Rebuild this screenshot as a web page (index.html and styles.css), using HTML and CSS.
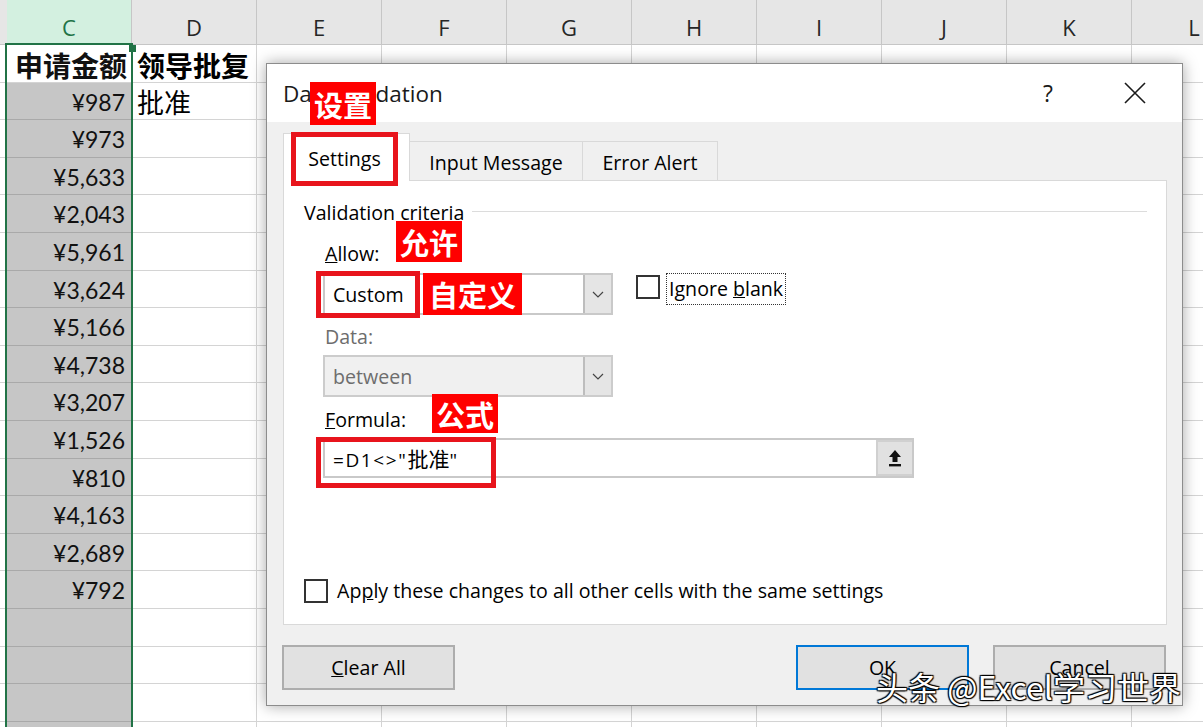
FILE: index.html
```html
<!DOCTYPE html>
<html>
<head>
    <title>Data Validation</title>
    <link rel="stylesheet" href="styles.css">
</head>
<body>
    <div class="sheet">
        <div class="colhead">
            <div class="stub"></div>
            <div class="col active">C</div>
            <div class="col">D</div>
            <div class="col">E</div>
            <div class="col">F</div>
            <div class="col">G</div>
            <div class="col">H</div>
            <div class="col">I</div>
            <div class="col">J</div>
            <div class="col">K</div>
            <div class="col">L</div>
        </div>
        <div id="rows"></div>
        <div class="selection"></div>
    </div>

    <div class="dialog">
        <div class="titlebar">
            <span class="title">Data Validation</span>
            <span class="help">?</span>
            <svg class="close" viewBox="0 0 22 22"><path d="M1 1L21 21M21 1L1 21" stroke="#1a1a1a" stroke-width="1.6" fill="none"/></svg>
        </div>
        <div class="dlg-body">
            <div class="tabs">
                <div class="tab active">Settings</div>
                <div class="tab msg">Input Message</div>
                <div class="tab err">Error Alert</div>
            </div>
            <div class="panel">
                <div class="legend"><span>Validation criteria</span><i></i></div>
                <div class="criteria">
                    <div class="lbl allow-lbl"><u>A</u>llow:</div>
                    <div class="allow-row">
                        <div class="combo"><span>Custom</span><b class="drop"><svg viewBox="0 0 12 7"><path d="M1 1L6 6L11 1" stroke="#444" stroke-width="1.2" fill="none"/></svg></b></div>
                        <div class="check">
                            <span class="box"></span>
                            <span class="focus">Ignore <u>b</u>lank</span>
                        </div>
                    </div>
                    <div class="lbl dim data-lbl">Data:</div>
                    <div class="combo disabled"><span>between</span><b class="drop"><svg viewBox="0 0 12 7"><path d="M1 1L6 6L11 1" stroke="#444" stroke-width="1.2" fill="none"/></svg></b></div>
                    <div class="lbl formula-lbl"><u>F</u>ormula:</div>
                    <div class="formula">
                        <span class="expr">=D1&lt;&gt;"<span class="cjk">批准</span>"</span>
                        <b class="ref"><svg viewBox="0 0 14 18"><path d="M7 1L13 8H9.5V13H4.5V8H1Z" fill="#111"/><rect x="1" y="15" width="12" height="2.4" fill="#111"/></svg></b>
                    </div>
                </div>
                <div class="check apply">
                    <span class="box"></span>
                    <span>Ap<u>p</u>ly these changes to all other cells with the same settings</span>
                </div>
            </div>
            <div class="buttons">
                <div class="btn clear"><u>C</u>lear All</div>
                <div class="btn ok">OK</div>
                <div class="btn cancel">Cancel</div>
            </div>
        </div>
    </div>

    <!-- red notes drawn over the screenshot -->
    <div class="tag t-settings">设置</div>
    <div class="tag t-allow">允许</div>
    <div class="tag t-custom">自定义</div>
    <div class="tag t-formula">公式</div>
    <div class="mark m-settings"></div>
    <div class="mark m-custom"></div>
    <div class="mark m-formula"></div>

    <div class="watermark">头条 @Excel学习世界</div>

    <script>
        const amounts = ['¥987', '¥973', '¥5,633', '¥2,043', '¥5,961', '¥3,624', '¥5,166', '¥4,738', '¥3,207', '¥1,526', '¥810', '¥4,163', '¥2,689', '¥792'];
        const rows = document.getElementById('rows');

        for (let r = 0; r < 19; r++) {
            const row = document.createElement('div');
            row.className = 'row';
            let html = '<div class="stub"></div>';
            if (r === 0) {
                html += '<div class="cell c head">申请金额</div><div class="cell d head">领导批复</div>';
            } else {
                html += '<div class="cell c fill">' + (amounts[r - 1] || '') + '</div>';
                html += '<div class="cell d">' + (r === 1 ? '批准' : '') + '</div>';
            }
            for (let i = 0; i < 8; i++) html += '<div class="cell"></div>';
            row.innerHTML = html;
            rows.appendChild(row);
        }
    </script>
</body>
</html>
```

FILE: styles.css
```css
body {
    margin: 0;
    position: relative;
    width: 1203px;
    height: 727px;
    overflow: hidden;
    background: #fff;
    font-family: "Open Sans", "Noto Sans CJK SC", sans-serif;
    color: #000;
}

/* spreadsheet */
.colhead {
    display: flex;
    height: 45px;
    background: #e6e6e6;
    border-bottom: 1px solid #c6c6c6;
    box-sizing: border-box;
}
.colhead .stub {
    flex: none;
    width: 7px;
}
.colhead .col {
    flex: none;
    width: 125px;
    box-sizing: border-box;
    border-right: 1px solid #c6c6c6;
    text-align: center;
    font-size: 22px;
    line-height: 34px;
    padding-top: 10px;
    color: #262626;
}
.colhead .col.active {
    background: #d3f0e0;
    color: #217346;
}
.row {
    display: flex;
    height: 37.6px;
}
.row .stub {
    flex: none;
    width: 7px;
    box-sizing: border-box;
    border-bottom: 1px solid #d4d4d4;
}
.cell {
    flex: none;
    width: 125px;
    box-sizing: border-box;
    border-right: 1px solid #d4d4d4;
    border-bottom: 1px solid #d4d4d4;
    white-space: nowrap;
}
.cell.c {
    text-align: right;
    padding-right: 6px;
    padding-top: 3px;
    font-family: Lato, "Liberation Sans", sans-serif;
    font-size: 23px;
    line-height: 33px;
    color: #111;
}
.cell.fill {
    background: #c6c6c6;
    border-bottom-color: #a9a9a9;
}
.cell.d {
    padding-left: 5px;
    padding-top: 2px;
    font-family: "Noto Sans CJK SC", sans-serif;
    font-size: 27px;
    line-height: 34px;
}
.cell.head {
    font-family: "Noto Sans CJK SC", sans-serif;
    font-weight: bold;
    font-size: 28px;
    line-height: 34px;
    padding-top: 3px;
    padding-right: 4px;
}
.selection {
    position: absolute;
    left: 5px;
    top: 43px;
    width: 128px;
    height: 700px;
    box-sizing: border-box;
    border: 2px solid #217346;
    border-bottom: none;
}
.selection::after {
    content: "";
    position: absolute;
    right: -5px;
    top: 0;
    width: 7px;
    height: 7px;
    background: #217346;
}

/* dialog */
.dialog {
    position: absolute;
    left: 266px;
    top: 63px;
    width: 917px;
    height: 643px;
    box-sizing: border-box;
    background: #f0f0f0;
    border: 1px solid #8c8c8c;
    box-shadow: 0 0 14px rgba(0, 0, 0, 0.35);
}
.titlebar {
    display: flex;
    align-items: center;
    height: 58px;
    background: #fff;
    padding-left: 16px;
}
.title {
    flex: 1;
    font-size: 22.5px;
    color: #1a1a1a;
}
.help {
    font-size: 23px;
    margin-right: 71px;
    color: #1a1a1a;
}
.close {
    width: 22px;
    height: 22px;
    margin-right: 36px;
}
.dlg-body {
    padding: 11px 15px 0 16px;
}
.tabs {
    display: flex;
    align-items: flex-end;
    height: 47px;
}
.tab {
    height: 39px;
    box-sizing: border-box;
    border: 1px solid #d9d9d9;
    border-left: none;
    border-bottom: none;
    display: flex;
    align-items: center;
    justify-content: center;
    font-size: 19.6px;
    padding-top: 2px;
}
.tab.active {
    width: 127px;
    height: 48px;
    margin-bottom: -1px;
    background: #fff;
    border-left: 1px solid #d9d9d9;
    position: relative;
    z-index: 1;
    padding-top: 2px;
    padding-right: 4px;
}
.tab.msg {
    width: 173px;
}
.tab.err {
    width: 135px;
}
.panel {
    height: 445px;
    box-sizing: border-box;
    background: #fff;
    border: 1px solid #d9d9d9;
    padding: 20px 19px 20px 20px;
    display: flex;
    flex-direction: column;
    font-size: 19.6px;
}
.legend {
    display: flex;
    align-items: center;
    line-height: 24px;
}
.legend i {
    flex: 1;
    border-top: 1px solid #dcdcdc;
    margin-left: 8px;
    margin-top: -3px;
}
.criteria {
    padding-left: 19px;
}
.lbl {
    padding-left: 2px;
    line-height: 24px;
}
.allow-lbl {
    margin-top: 17px;
}
.data-lbl {
    margin-top: 10px;
}
.formula-lbl {
    margin-top: 11px;
}
.dim {
    color: #6d6d6d;
}
.allow-row {
    display: flex;
    align-items: flex-start;
    margin-top: 7px;
}
.combo {
    display: flex;
    align-items: center;
    width: 290px;
    height: 42px;
    box-sizing: border-box;
    border: 2px solid #c9c9c9;
    background: #fff;
}
.combo span {
    flex: 1;
    padding-left: 8px;
}
.combo .drop {
    width: 28px;
    height: 100%;
    box-sizing: border-box;
    background: #e5e5e5;
    border-left: 2px solid #bdbdbd;
    display: flex;
    align-items: center;
    justify-content: center;
}
.combo .drop svg {
    width: 12px;
    height: 7px;
}
.combo.disabled {
    margin-top: 6px;
    background: #f0f0f0;
    border-color: #cccccc;
    color: #6d6d6d;
}
.check {
    display: flex;
    align-items: center;
}
.check .box {
    width: 24px;
    height: 24px;
    box-sizing: border-box;
    border: 2px solid #333;
    background: #fff;
}
.allow-row .check {
    margin-left: 23px;
    margin-top: 0;
}
.allow-row .check .box {
    margin-top: -4px;
}
.focus {
    margin-left: 6px;
    padding: 0 2px;
    line-height: 30px;
    border: 1px dotted #333;
}
.formula {
    display: flex;
    align-items: center;
    width: 591px;
    height: 40px;
    margin-top: 6px;
    box-sizing: border-box;
    border: 2px solid #c9c9c9;
}
.expr {
    flex: 1;
    padding-left: 8px;
    font-size: 19px;
    letter-spacing: 1.6px;
}
.expr .cjk {
    font-size: 21px;
    letter-spacing: 0;
}
.ref {
    width: 36px;
    height: 100%;
    box-sizing: border-box;
    background: #e1e1e1;
    border: 2px solid #d0d0d0;
    border-right: none;
    display: flex;
    align-items: center;
    justify-content: center;
}
.ref svg {
    width: 14px;
    height: 18px;
}
.apply {
    margin-top: auto;
    line-height: 26px;
}
.apply .box {
    margin-right: 9px;
}
.buttons {
    display: flex;
    margin-top: 20px;
}
.btn {
    width: 173px;
    height: 45px;
    box-sizing: border-box;
    background: #e1e1e1;
    border: 2px solid #adadad;
    display: flex;
    align-items: center;
    justify-content: center;
    font-size: 19.6px;
}
.btn.clear {
    margin-left: -1px;
}
.btn.ok {
    margin-left: auto;
    border-color: #0078d7;
}
.btn.cancel {
    margin-left: 24px;
    margin-right: 1px;
}

/* red annotations */
.tag {
    position: absolute;
    z-index: 5;
    background: #ff0000;
    color: #fff;
    font-family: "Noto Sans CJK SC", sans-serif;
    font-weight: bold;
    font-size: 29px;
    display: flex;
    align-items: center;
    justify-content: center;
}
.t-settings { left: 310px; top: 82px; width: 66px; height: 43px; }
.t-allow { left: 396px; top: 221px; width: 66px; height: 41px; }
.t-custom { left: 423px; top: 273px; width: 99px; height: 42px; }
.t-formula { left: 432px; top: 394px; width: 66px; height: 39px; }
.mark {
    position: absolute;
    z-index: 5;
    box-sizing: border-box;
    border: 5px solid #e8141c;
}
.m-settings { left: 291px; top: 132px; width: 107px; height: 54px; }
.m-custom { left: 316px; top: 271px; width: 104px; height: 47px; }
.m-formula { left: 316px; top: 437px; width: 180px; height: 51px; }

.watermark {
    position: absolute;
    z-index: 6;
    left: 876px;
    top: 664px;
    font-family: "Noto Sans CJK SC", sans-serif;
    font-size: 32px;
    line-height: 44px;
    color: #fff;
    white-space: nowrap;
    text-shadow: 1px 1px 1px #000, -1px -1px 1px #000, 1px -1px 1px #000, -1px 1px 1px #000;
}
```
